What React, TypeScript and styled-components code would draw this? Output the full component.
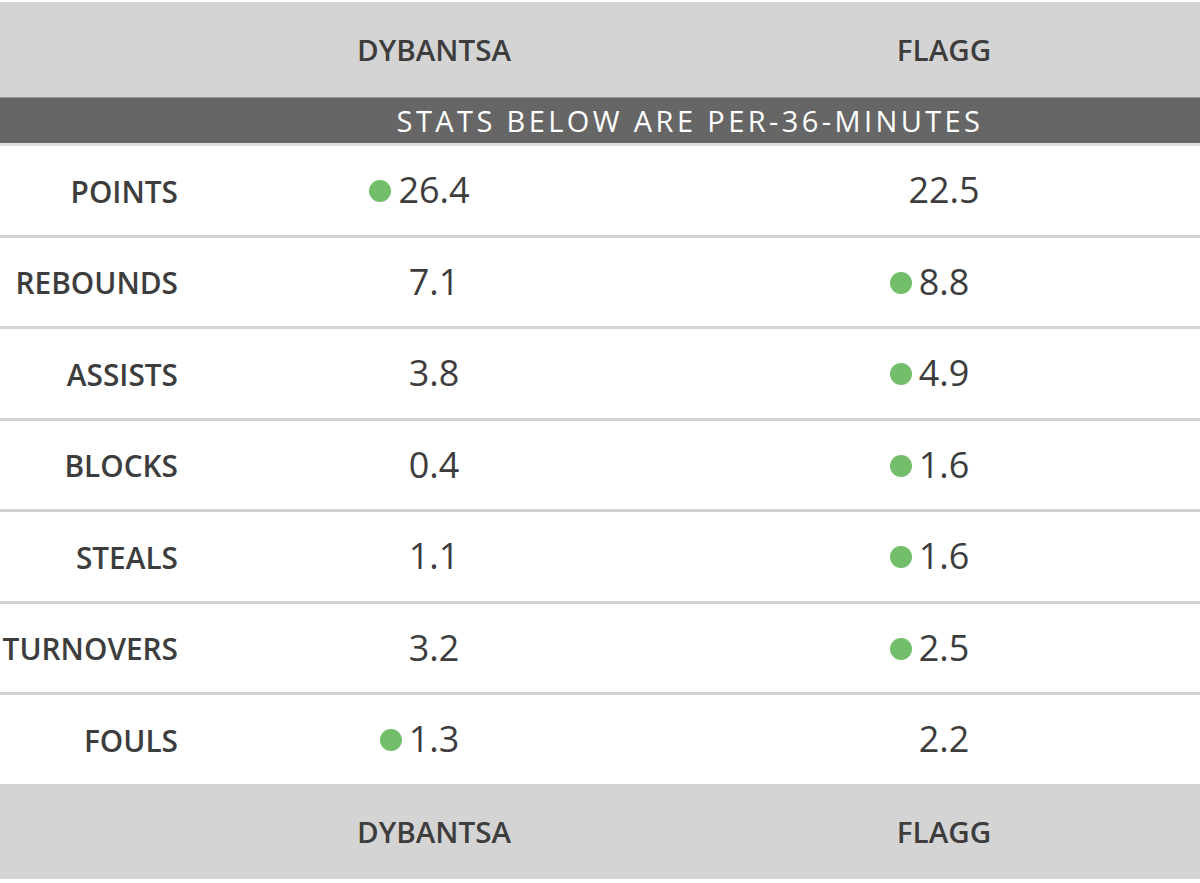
import React from "react";
import styled, { createGlobalStyle } from "styled-components";

const Global = createGlobalStyle`
  html, body { margin: 0; padding: 0; background: #ffffff; }
  body { font-family: "Open Sans", "Liberation Sans", sans-serif; }
`;

const Page = styled.div`
  width: 1200px;
  padding-top: 2px;
  background: #ffffff;
`;

const Grid = styled.div`
  display: grid;
  grid-template-columns: 180px 492px 1fr;
  column-gap: 8px;
  align-items: center;
`;

const HeadBar = styled(Grid)`
  height: 95px;
  background: #d4d4d4;
  color: #3d3d3d;
  font-weight: 600;
  font-size: 29.6px;
`;

const HeadCell = styled.div`
  text-align: center;
  padding-top: 0px;
`;

const Banner = styled.div`
  height: 45px;
  background: #666666;
  border-top: 1px solid #9a9a9a;
  border-bottom: 3px solid #dcdcdc;
  color: #ffffff;
  display: flex;
  align-items: center;
  justify-content: center;
  padding-left: 180px;
  font-size: 29px;
  font-weight: 400;
  letter-spacing: 3.4px;
`;

const Row = styled(Grid)<{ $first?: boolean }>`
  height: 88.5px;
  border-top: ${(p) => (p.$first ? "none" : "3px solid #d3d3d3")};
  background: #ffffff;
`;

const Label = styled.div`
  text-align: right;
  padding-right: 2px;
  font-size: 29.8px;
  font-weight: 600;
  color: #3d3d3d;
  padding-top: 2px;
`;

const ValueCell = styled.div`
  display: flex;
  justify-content: center;
`;

const Value = styled.span`
  position: relative;
  font-size: 36px;
  font-weight: 400;
  color: #3d3d3d;
  line-height: 1;
`;

const Dot = styled.span`
  position: absolute;
  left: -29px;
  top: 50%;
  margin-top: -10px;
  width: 22px;
  height: 22px;
  border-radius: 50%;
  background: #72be6a;
`;

const Footer = styled(HeadBar)``;

const BottomGap = styled.div`
  height: 5px;
  background: #ffffff;
`;

type Stat = { label: string; a: string; b: string; win: "a" | "b" };

const stats: Stat[] = [
  { label: "POINTS", a: "26.4", b: "22.5", win: "a" },
  { label: "REBOUNDS", a: "7.1", b: "8.8", win: "b" },
  { label: "ASSISTS", a: "3.8", b: "4.9", win: "b" },
  { label: "BLOCKS", a: "0.4", b: "1.6", win: "b" },
  { label: "STEALS", a: "1.1", b: "1.6", win: "b" },
  { label: "TURNOVERS", a: "3.2", b: "2.5", win: "b" },
  { label: "FOULS", a: "1.3", b: "2.2", win: "a" },
];

const Val = ({ v, win }: { v: string; win: boolean }) => (
  <ValueCell>
    <Value>
      {win && <Dot />}
      {v}
    </Value>
  </ValueCell>
);

export default function App() {
  return (
    <Page>
      <Global />
      <HeadBar>
        <div />
        <HeadCell>DYBANTSA</HeadCell>
        <HeadCell>FLAGG</HeadCell>
      </HeadBar>
      <Banner>STATS BELOW ARE PER-36-MINUTES</Banner>
      {stats.map((s, i) => (
        <Row key={s.label} $first={i === 0}>
          <Label>{s.label}</Label>
          <Val v={s.a} win={s.win === "a"} />
          <Val v={s.b} win={s.win === "b"} />
        </Row>
      ))}
      <Footer>
        <div />
        <HeadCell>DYBANTSA</HeadCell>
        <HeadCell>FLAGG</HeadCell>
      </Footer>
      <BottomGap />
    </Page>
  );
}
